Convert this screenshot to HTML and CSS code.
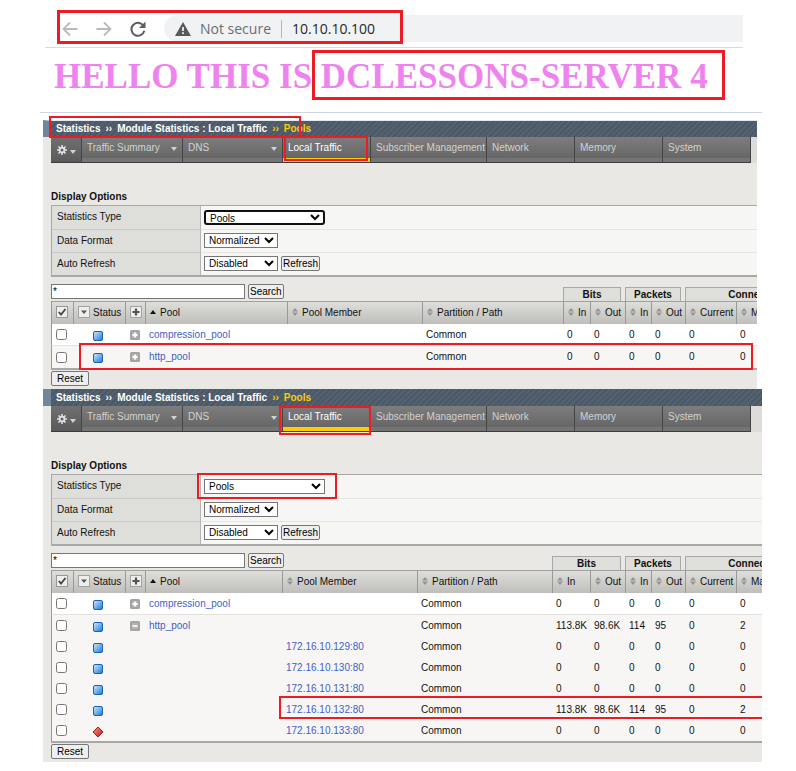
FILE: index.html
```html
<!DOCTYPE html>
<html lang="en">
<head>
<meta charset="utf-8">
<title>Pool statistics</title>
<link rel="stylesheet" href="styles.css">
</head>
<body>
<svg class="sprite" aria-hidden="true">
  <defs>
    <linearGradient id="g-blue" x1="0" y1="0" x2="1" y2="1">
      <stop offset="0" stop-color="#d3eafa"/><stop offset="1" stop-color="#1c78d8"/>
    </linearGradient>
    <linearGradient id="g-red" x1="0" y1="0" x2="1" y2="1">
      <stop offset="0" stop-color="#f79a90"/><stop offset="1" stop-color="#c01414"/>
    </linearGradient>
    <symbol id="sort" viewBox="0 0 6 8"><path d="M3 0 6 3.500H0zM3 8 0 4.500H6z" fill="#959595"/></symbol>
    <symbol id="asc" viewBox="0 0 6 8"><path d="M3 2 6 6H0z" fill="#111"/></symbol>
    <symbol id="caret" viewBox="0 0 6 4"><path d="M0 0H6L3 4z" fill="currentColor"/></symbol>
    <symbol id="blue" viewBox="0 0 10 10"><rect x=".5" y=".5" width="9" height="9" rx="1.500" fill="url(#g-blue)" stroke="#1763b8"/></symbol>
    <symbol id="red" viewBox="0 0 12 12"><path d="M6 1 11 6 6 11 1 6z" fill="url(#g-red)" stroke="#b01818" stroke-linejoin="round"/></symbol>
    <symbol id="plus" viewBox="0 0 10 10"><rect width="10" height="10" rx="1.500" fill="#a3a3a3"/><path d="M2 2H8V8H2z" fill="#b4b4b4"/><path d="M5 2.500V7.500M2.500 5H7.500" stroke="#fff" stroke-width="1.800"/></symbol>
    <symbol id="minus" viewBox="0 0 10 10"><rect width="10" height="10" rx="1.500" fill="#a3a3a3"/><path d="M2 2H8V8H2z" fill="#b4b4b4"/><path d="M2.500 5H7.500" stroke="#fff" stroke-width="1.600"/></symbol>
    <symbol id="h-check" viewBox="0 0 12 12"><rect x=".5" y=".5" width="11" height="11" fill="#eeeeec" stroke="#969696"/><path d="M2.800 6 5 8.500 9.500 3" fill="none" stroke="#444" stroke-width="1.800"/></symbol>
    <symbol id="h-menu" viewBox="0 0 12 12"><rect x=".5" y=".5" width="11" height="11" fill="#eeeeec" stroke="#a2a2a2"/><path d="M3 4.500H9L6 8z" fill="#555"/></symbol>
    <symbol id="h-plus" viewBox="0 0 12 12"><rect x=".5" y=".5" width="11" height="11" fill="#eeeeec" stroke="#a2a2a2"/><path d="M6 2.500V9.500M2.500 6H9.500" stroke="#555" stroke-width="2.200"/></symbol>
    <symbol id="gear" viewBox="0 0 10 10"><circle cx="5" cy="5" r="2.400" fill="none" stroke="#e4e4e4" stroke-width="1.700"/><path d="M5 0V2M5 8V10M0 5H2M8 5H10M1.500 1.500 2.900 2.900M7.100 7.100 8.500 8.500M1.500 8.500 2.900 7.100M7.100 2.900 8.500 1.500" stroke="#e4e4e4" stroke-width="1.500"/></symbol>
  </defs>
</svg>

<header class="browser">
  <div class="toolbar">
    <button class="nav" aria-label="Back"><svg viewBox="0 0 16 16"><path d="M15.500 8H1.500M8 1.500 1.500 8 8 14.500" fill="none" stroke="#b9babc" stroke-width="1.800"/></svg></button>
    <button class="nav" aria-label="Forward"><svg viewBox="0 0 16 16"><path d="M.5 8H14.500M8 1.500 14.500 8 8 14.500" fill="none" stroke="#b9babc" stroke-width="1.800"/></svg></button>
    <button class="nav" aria-label="Reload"><svg viewBox="0 0 16 16"><path d="M13.300 4.500A6.500 6.500 0 1 0 14.300 9.800" fill="none" stroke="#5a5d61" stroke-width="2"/><path d="M15.500 .5V7H9z" fill="#5a5d61"/></svg></button>
    <div class="address">
      <svg class="warn" viewBox="0 0 16 14"><path d="M8 0 16 14H0z" fill="#55585c"/><path d="M8 5V9M8 10.200V12" stroke="#f1f2f4" stroke-width="1.800"/></svg>
      <span class="insecure">Not secure</span>
      <span class="url">10.10.10.100</span>
    </div>
  </div>
  <h1>HELLO THIS IS DCLESSONS-SERVER 4</h1>
  <i class="mark mark-address"></i>
  <i class="mark mark-server"></i>
</header>

<section class="panel panel-first">
  <div class="clip">
    <h2 class="crumbs"><span>Statistics</span><span>››</span><span>Module Statistics : Local Traffic</span><span class="here">››</span><span class="here">Pools</span></h2>
    <nav class="tabs">
      <a href="#" class="tab tab-gear" aria-label="Settings"><svg class="gear"><use href="#gear"/></svg><svg class="caret"><use href="#caret"/></svg></a>
      <a href="#" class="tab tab-summary">Traffic Summary<svg class="caret"><use href="#caret"/></svg></a>
      <a href="#" class="tab tab-dns">DNS<svg class="caret"><use href="#caret"/></svg></a>
      <a href="#" class="tab active">Local Traffic</a>
      <a href="#" class="tab tab-wide">Subscriber Management</a>
      <a href="#" class="tab">Network</a>
      <a href="#" class="tab">Memory</a>
      <a href="#" class="tab">System</a>
    </nav>
    <div class="content">
      <h3>Display Options</h3>
      <table class="options">
        <tr><th><label for="type1">Statistics Type</label></th><td><select id="type1" class="type focused"><option>Pools</option></select></td></tr>
        <tr><th><label for="format1">Data Format</label></th><td><select id="format1" class="short"><option>Normalized</option></select></td></tr>
        <tr><th><label for="refresh1">Auto Refresh</label></th><td><select id="refresh1" class="short"><option>Disabled</option></select><button class="btn">Refresh</button></td></tr>
      </table>
      <table class="stats">
        <colgroup><col class="c-check"><col class="c-status"><col class="c-plus"><col class="c-pool"><col class="c-member"><col class="c-path"><col class="c-bin"><col class="c-out"><col class="c-pin"><col class="c-pout"><col class="c-cur"><col class="c-max"></colgroup>
        <thead>
          <tr class="groups">
            <td colspan="6"><form class="search"><input type="text" value="*" aria-label="Search pools"><button type="button" class="btn">Search</button></form></td>
            <th colspan="2"><span>Bits</span></th><th colspan="2"><span>Packets</span></th><th colspan="2"><span>Connections</span></th>
          </tr>
          <tr class="heads">
            <th><svg class="box"><use href="#h-check"/></svg></th>
            <th><svg class="box"><use href="#h-menu"/></svg>Status</th>
            <th><svg class="box"><use href="#h-plus"/></svg></th>
            <th><svg class="sort"><use href="#asc"/></svg>Pool</th>
            <th><svg class="sort"><use href="#sort"/></svg>Pool Member</th>
            <th><svg class="sort"><use href="#sort"/></svg>Partition / Path</th>
            <th><svg class="sort"><use href="#sort"/></svg>In</th>
            <th><svg class="sort"><use href="#sort"/></svg>Out</th>
            <th><svg class="sort"><use href="#sort"/></svg>In</th>
            <th><svg class="sort"><use href="#sort"/></svg>Out</th>
            <th><svg class="sort"><use href="#sort"/></svg>Current</th>
            <th><svg class="sort"><use href="#sort"/></svg>Maximum</th>
          </tr>
        </thead>
        <tbody>
          <tr class="plain"><td><input type="checkbox" aria-label="compression_pool"></td><td class="st"><svg class="icon"><use href="#blue"/></svg></td><td><svg class="icon"><use href="#plus"/></svg></td><td><a href="#">compression_pool</a></td><td></td><td>Common</td><td>0</td><td>0</td><td>0</td><td>0</td><td>0</td><td>0</td></tr>
          <tr><td><input type="checkbox" aria-label="http_pool"></td><td class="st"><svg class="icon"><use href="#blue"/></svg></td><td><svg class="icon"><use href="#plus"/></svg></td><td><a href="#">http_pool</a></td><td></td><td>Common</td><td>0</td><td>0</td><td>0</td><td>0</td><td>0</td><td>0</td></tr>
        </tbody>
      </table>
      <button class="btn reset">Reset</button>
    </div>
  </div>
  <i class="mark mark-crumbs"></i>
  <i class="mark mark-tab"></i>
  <i class="mark mark-row"></i>
</section>

<section class="panel panel-second">
  <div class="clip">
    <h2 class="crumbs"><span>Statistics</span><span>››</span><span>Module Statistics : Local Traffic</span><span class="here">››</span><span class="here">Pools</span></h2>
    <nav class="tabs">
      <a href="#" class="tab tab-gear" aria-label="Settings"><svg class="gear"><use href="#gear"/></svg><svg class="caret"><use href="#caret"/></svg></a>
      <a href="#" class="tab tab-summary">Traffic Summary<svg class="caret"><use href="#caret"/></svg></a>
      <a href="#" class="tab tab-dns">DNS<svg class="caret"><use href="#caret"/></svg></a>
      <a href="#" class="tab active">Local Traffic</a>
      <a href="#" class="tab tab-wide">Subscriber Management</a>
      <a href="#" class="tab">Network</a>
      <a href="#" class="tab">Memory</a>
      <a href="#" class="tab">System</a>
    </nav>
    <div class="content">
      <h3>Display Options</h3>
      <table class="options">
        <tr><th><label for="type2">Statistics Type</label></th><td><select id="type2" class="type"><option>Pools</option></select></td></tr>
        <tr><th><label for="format2">Data Format</label></th><td><select id="format2" class="short"><option>Normalized</option></select></td></tr>
        <tr><th><label for="refresh2">Auto Refresh</label></th><td><select id="refresh2" class="short"><option>Disabled</option></select><button class="btn">Refresh</button></td></tr>
      </table>
      <table class="stats">
        <colgroup><col class="c-check"><col class="c-status"><col class="c-plus"><col class="c-pool-s"><col class="c-member"><col class="c-member"><col class="c-bin-l"><col class="c-out"><col class="c-pin"><col class="c-pout"><col class="c-cur"><col class="c-max"></colgroup>
        <thead>
          <tr class="groups">
            <td colspan="6"><form class="search"><input type="text" value="*" aria-label="Search pools"><button type="button" class="btn">Search</button></form></td>
            <th colspan="2"><span>Bits</span></th><th colspan="2"><span>Packets</span></th><th colspan="2"><span>Connections</span></th>
          </tr>
          <tr class="heads">
            <th><svg class="box"><use href="#h-check"/></svg></th>
            <th><svg class="box"><use href="#h-menu"/></svg>Status</th>
            <th><svg class="box"><use href="#h-plus"/></svg></th>
            <th><svg class="sort"><use href="#asc"/></svg>Pool</th>
            <th><svg class="sort"><use href="#sort"/></svg>Pool Member</th>
            <th><svg class="sort"><use href="#sort"/></svg>Partition / Path</th>
            <th><svg class="sort"><use href="#sort"/></svg>In</th>
            <th><svg class="sort"><use href="#sort"/></svg>Out</th>
            <th><svg class="sort"><use href="#sort"/></svg>In</th>
            <th><svg class="sort"><use href="#sort"/></svg>Out</th>
            <th><svg class="sort"><use href="#sort"/></svg>Current</th>
            <th><svg class="sort"><use href="#sort"/></svg>Maximum</th>
          </tr>
        </thead>
        <tbody>
          <tr class="plain"><td><input type="checkbox" aria-label="compression_pool"></td><td class="st"><svg class="icon"><use href="#blue"/></svg></td><td><svg class="icon"><use href="#plus"/></svg></td><td><a href="#">compression_pool</a></td><td></td><td>Common</td><td>0</td><td>0</td><td>0</td><td>0</td><td>0</td><td>0</td></tr>
          <tr class="member"><td><input type="checkbox" aria-label="http_pool"></td><td class="st"><svg class="icon"><use href="#blue"/></svg></td><td><svg class="icon"><use href="#minus"/></svg></td><td><a href="#">http_pool</a></td><td></td><td>Common</td><td>113.8K</td><td>98.6K</td><td>114</td><td>95</td><td>0</td><td>2</td></tr>
          <tr class="member"><td><input type="checkbox" aria-label="172.16.10.129:80"></td><td class="st"><svg class="icon"><use href="#blue"/></svg></td><td></td><td></td><td><a href="#">172.16.10.129:80</a></td><td>Common</td><td>0</td><td>0</td><td>0</td><td>0</td><td>0</td><td>0</td></tr>
          <tr class="member"><td><input type="checkbox" aria-label="172.16.10.130:80"></td><td class="st"><svg class="icon"><use href="#blue"/></svg></td><td></td><td></td><td><a href="#">172.16.10.130:80</a></td><td>Common</td><td>0</td><td>0</td><td>0</td><td>0</td><td>0</td><td>0</td></tr>
          <tr class="member"><td><input type="checkbox" aria-label="172.16.10.131:80"></td><td class="st"><svg class="icon"><use href="#blue"/></svg></td><td></td><td></td><td><a href="#">172.16.10.131:80</a></td><td>Common</td><td>0</td><td>0</td><td>0</td><td>0</td><td>0</td><td>0</td></tr>
          <tr class="member"><td><input type="checkbox" aria-label="172.16.10.132:80"></td><td class="st"><svg class="icon"><use href="#blue"/></svg></td><td></td><td></td><td><a href="#">172.16.10.132:80</a></td><td>Common</td><td>113.8K</td><td>98.6K</td><td>114</td><td>95</td><td>0</td><td>2</td></tr>
          <tr class="member"><td><input type="checkbox" aria-label="172.16.10.133:80"></td><td class="st"><svg class="icon icon-down"><use href="#red"/></svg></td><td></td><td></td><td><a href="#">172.16.10.133:80</a></td><td>Common</td><td>0</td><td>0</td><td>0</td><td>0</td><td>0</td><td>0</td></tr>
        </tbody>
      </table>
      <button class="btn reset">Reset</button>
    </div>
    <i class="mark mark-member"></i>
  </div>
  <i class="mark mark-tab"></i>
  <i class="mark mark-type"></i>
</section>
</body>
</html>
```
FILE: styles.css
```css
* { box-sizing: border-box; }

body {
  margin: 0;
  background: #fff;
  color: #111;
  font: 10px/12px "Liberation Sans", Arial, sans-serif;
}

svg { display: block; flex: none; }
.sprite { position: absolute; width: 0; height: 0; }
button, input, select { margin: 0; font: inherit; color: #000; }
a { color: #3f5fc6; text-decoration: none; }

/* Highlight frames */
.mark { position: absolute; border: 3px solid #ed1c24; pointer-events: none; }

/* Browser bar and greeting */
.browser {
  position: relative;
  margin: 0 34px 7px 40px;
  border-bottom: 1px solid #ccd5e4;
}
.toolbar {
  display: flex;
  align-items: center;
  gap: 18px;
  margin: 0 19px 0 5px;
  padding: 15px 0 5px 17px;
  border-bottom: 1px solid #d8dade;
}
.nav { width: 16px; height: 16px; padding: 0; border: 0; background: none; }
.nav svg { width: 16px; height: 16px; }
.address {
  flex: 1;
  display: flex;
  align-items: center;
  height: 27px;
  padding-left: 11px;
  border-radius: 14px 0 0 14px;
  background: #f1f2f4;
  font: 14px/18px "Open Sans", "Noto Sans", sans-serif;
}
.warn { width: 16px; height: 14px; margin-right: 9px; }
.insecure { margin-right: 10px; padding-right: 10px; border-right: 1px solid #b4b6b9; color: #6a6d71; }
.url { color: #26282b; }
h1 {
  margin: 0 0 0 14px;
  padding: 9px 0 15px;
  font: bold 35px/40px "Liberation Serif", "Times New Roman", serif;
  color: #ee82ee;
  white-space: nowrap;
}
.mark-address { left: 17px; top: 10px; width: 346px; height: 34px; }
.mark-server { left: 272px; top: 50px; width: 413px; height: 50px; }

/* Statistics panels */
.panel { position: relative; }
.panel-first { margin: 0 39px 0 43px; }
.panel-second { margin: 0 34px 0 43px; }
.clip { position: relative; overflow: hidden; background: #e9e8e4; }

.crumbs {
  display: flex;
  gap: 5px;
  height: 17px;
  margin: 0;
  padding-left: 5px;
  border-left: 8px solid #71859b;
  background: repeating-linear-gradient(135deg, #4b5967 0 2px, #536170 2px 4px);
  font: bold 10px/17px "Liberation Sans", Arial, sans-serif;
  color: #fff;
  white-space: nowrap;
}
.panel-first .crumbs { border-top: 1px solid #e4e8ee; line-height: 15px; }
.here { color: #fc0; }

.tabs { display: flex; height: 26px; padding-left: 8px; background: linear-gradient(#dddcd8, #dddcd8) 8px 0 no-repeat; }
.tab {
  flex: 0 0 88px;
  display: flex;
  justify-content: space-between;
  padding: 5px 5px 0;
  border-right: 1px solid #444;
  border-bottom: 1px solid #3c3c3c;
  background: linear-gradient(#747474, #747474) 0 21px / 100% 4px no-repeat, linear-gradient(#7d7d7d, #626262);
  color: #d2d2d2;
  white-space: nowrap;
}
.tab .caret { width: 6px; height: 4px; margin-top: 5px; }
.tab-gear { flex-basis: 31px; padding-left: 6px; padding-top: 8px; background: linear-gradient(#707070, #5a5a5a); }
.tab-gear .gear { width: 10px; height: 10px; }
.tab-summary { flex-basis: 101px; }
.tab-dns { flex-basis: 100px; }
.tab-wide { flex-basis: 116px; padding-right: 0; }
.active { color: #fff; background: linear-gradient(#fc0, #fc0) 0 21px / 100% 4px no-repeat, linear-gradient(#7d7d7d, #626262); }

.content { padding: 28px 0 3px 8px; }
h3 { margin: 0; font: bold 10px/12px "Liberation Sans", Arial, sans-serif; }

.options {
  width: 100%;
  margin: 2px 0 7px;
  border-spacing: 0;
  border: 1px solid #a8a8a8;
  border-right: 0;
  border-bottom-width: 2px;
}
.options th, .options td { height: 23px; padding: 0 3px 1px; border-top: 1px solid #e6e5e2; background: #f6f6f4; }
.options th { width: 149px; padding-left: 5px; border-top-color: #c9c8c5; border-right: 1px solid #b5b4b2; background: #dededa; font-weight: normal; text-align: left; }
.options tr:first-child > * { border-top: 0; }
.options td { display: flex; align-items: center; gap: 3px; }
select { height: 15px; padding: 0; border: 1px solid #767676; border-radius: 0; background-color: #fff; }
.short { width: 74px; }
.type { width: 121px; }
.focused { border: 2px solid #101010; border-radius: 3px; }
.btn { height: 15px; padding: 0 1px; border: 1px solid #767676; border-radius: 2px; background: #efefef; line-height: 12px; white-space: nowrap; }

.stats { width: 785px; table-layout: fixed; border-spacing: 0; border-bottom: 2px solid #a8a8a8; white-space: nowrap; }
.stats th, .stats td { padding: 0 0 0 4px; text-align: left; font-weight: normal; }
.c-check { width: 22px; }
.c-status { width: 52px; }
.c-plus { width: 20px; }
.c-pool { width: 142px; }
.c-pool-s { width: 137px; }
.c-member { width: 135px; }
.c-path { width: 141px; }
.c-bin { width: 27px; }
.c-bin-l { width: 38px; }
.c-out { width: 35px; }
.c-pin { width: 26px; }
.c-pout { width: 34px; }
.c-cur { width: 51px; }
.c-max { width: 100px; }

.stats .groups > * { height: 17px; padding: 0; vertical-align: bottom; }
.search { display: flex; gap: 3px; height: 17px; }
.search input { width: 194px; height: 15px; padding: 0 1px; border: 1px solid #767676; background: #fff; }
.groups span { display: block; height: 14px; margin-right: 4px; border: 1px solid #a8a8a8; border-bottom: 0; background: #dededa; font-weight: bold; text-align: center; line-height: 13px; }

.stats .heads th { height: 23px; border-top: 1px solid #a0a0a0; border-left: 1px solid #999; background: linear-gradient(#dededb, #bfbeba); }
.heads svg { display: inline-block; vertical-align: middle; margin-top: -2px; }
.box { width: 12px; height: 12px; margin-right: 3px; }
.sort { width: 6px; height: 8px; margin-right: 4px; }

.stats tbody td { height: 22px; background: #f7f6f5; }
.stats tbody td:first-child { border-left: 1px solid #999; }
.stats .plain td { background: #fff; border-bottom: 1px solid #e2e1df; }
.stats .member td { height: 21px; }
.stats input[type="checkbox"] { display: block; width: 11px; height: 11px; }
.icon { width: 10px; height: 10px; margin-left: 1px; }
.stats .st { padding: 2px 0 0 19px; }
.icon-down { width: 12px; height: 12px; margin-left: 0; }
.reset { display: block; margin-top: 1px; padding: 0 5px; }

/* Frames inside the panels */
.panel .mark { border-width: 2px; }
.panel .mark-crumbs { left: 6px; top: -4px; width: 252px; height: 22px; }
.panel-first .mark-tab { left: 241px; top: 16px; width: 84px; height: 25px; }
.panel .mark-row { left: 36px; top: 223px; right: 4px; height: 27px; }
.panel-second .mark-tab { left: 236px; top: 17px; width: 92px; height: 29px; }
.panel .mark-type { left: 154px; top: 84px; width: 140px; height: 26px; }
.panel .mark-member { left: 236px; right: -4px; top: 307px; height: 23px; }
```
